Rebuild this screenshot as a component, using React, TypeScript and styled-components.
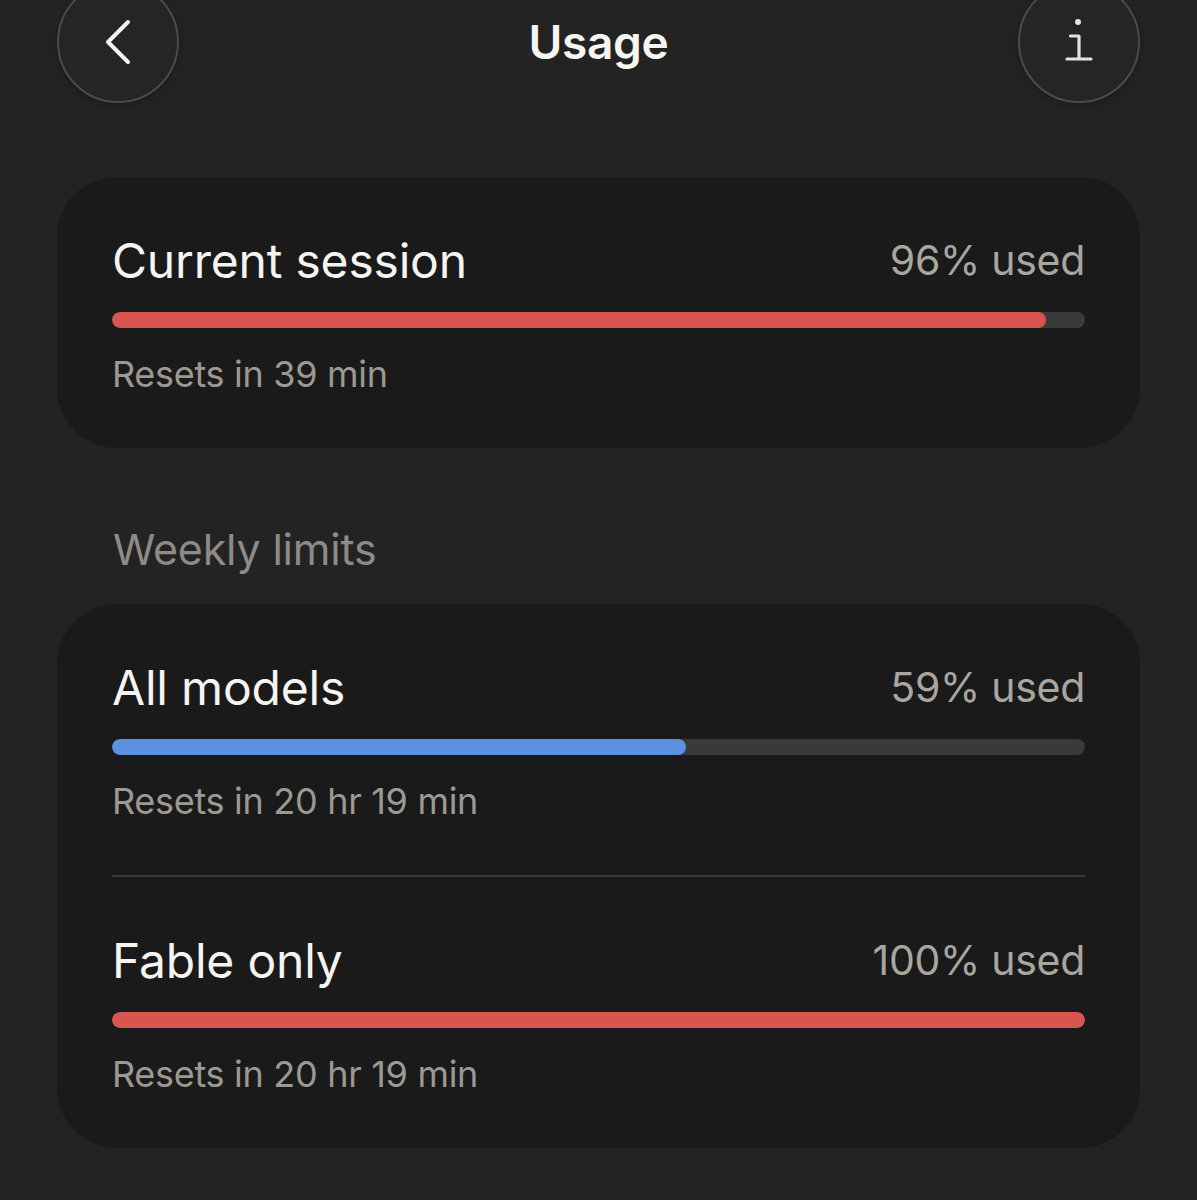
import styled, { createGlobalStyle } from 'styled-components';

const GlobalStyle = createGlobalStyle`
	html, body {
		margin: 0;
		padding: 0;
		background: #232323;
	}
	body {
		font-family: Inter, 'Noto Sans', 'DejaVu Sans', sans-serif;
		-webkit-font-smoothing: antialiased;
	}
`;

type Limit = {
	title: string;
	percent: number;
	resets: string;
	color: string;
};

const session: Limit = {
	title: 'Current session',
	percent: 96,
	resets: 'Resets in 39 min',
	color: '#d9554e',
};

const weekly: Limit[] = [
	{ title: 'All models', percent: 59, resets: 'Resets in 20 hr 19 min', color: '#5b91de' },
	{ title: 'Fable only', percent: 100, resets: 'Resets in 20 hr 19 min', color: '#d9554e' },
];

const UsageSection = ({ limit, divided }: { limit: Limit; divided?: boolean }) => (
	<Section divided={divided}>
		<TopRow>
			<Title>{limit.title}</Title>
			<Used>{limit.percent}% used</Used>
		</TopRow>
		<Track>
			<Fill color={limit.color} style={{ width: `${limit.percent}%` }} />
		</Track>
		<Resets>{limit.resets}</Resets>
	</Section>
);

const App = () => (
	<Page>
		<GlobalStyle />
		<Header>
			<RoundButton aria-label="Back">
				<svg width="40" height="50" viewBox="0 0 40 50">
					<path
						d="M30 5 L10 25 L30 45"
						fill="none"
						stroke="#f4f2ee"
						strokeWidth="4"
						strokeLinecap="round"
						strokeLinejoin="round"
					/>
				</svg>
			</RoundButton>
			<PageTitle>Usage</PageTitle>
			<RoundButton aria-label="Info">
				<svg width="40" height="50" viewBox="0 0 40 50">
					<circle cx="19" cy="5" r="3" fill="#e6e3dc" />
					<path
						d="M11.5 19 H20 V42 M8 42 H32"
						fill="none"
						stroke="#e6e3dc"
						strokeWidth="3.2"
						strokeLinecap="round"
						strokeLinejoin="round"
					/>
				</svg>
			</RoundButton>
		</Header>

		<Card>
			<UsageSection limit={session} />
		</Card>

		<GroupLabel>Weekly limits</GroupLabel>

		<Card>
			{weekly.map((l, i) => (
				<UsageSection key={l.title} limit={l} divided={i > 0} />
			))}
		</Card>
	</Page>
);

const Page = styled.div`
	width: 1197px;
	height: 1200px;
	box-sizing: border-box;
	padding: 0 57px;
	overflow: hidden;
	display: flex;
	flex-direction: column;
	background: #232323;
`;

const Header = styled.div`
	display: flex;
	align-items: center;
	justify-content: space-between;
	height: 122px;
	margin-top: -19px;
	margin-bottom: 74px;
`;

const RoundButton = styled.div`
	width: 122px;
	height: 122px;
	box-sizing: border-box;
	border-radius: 50%;
	border: 2px solid #4b4b4b;
	background: #252525;
	display: flex;
	align-items: center;
	justify-content: center;
	box-shadow: 0 2px 6px rgba(0, 0, 0, 0.25);
`;

const PageTitle = styled.div`
	font-size: 46px;
	font-weight: 600;
	color: #f7f5f1;
	line-height: 56px;
	letter-spacing: -0.3px;
`;

const Card = styled.div`
	background: #1a1a1a;
	border-radius: 60px;
	padding: 0 55px;
	display: flex;
	flex-direction: column;
`;

const Section = styled.div<{ divided?: boolean }>`
	padding: 55px 0 52px;
	border-top: ${({ divided }) => (divided ? '2px solid #3a3a3a' : 'none')};
`;

const TopRow = styled.div`
	display: flex;
	align-items: center;
	justify-content: space-between;
	height: 56px;
`;

const Title = styled.div`
	font-size: 48px;
	font-weight: 400;
	color: #f6f4f0;
	letter-spacing: -0.2px;
`;

const Used = styled.div`
	font-size: 41px;
	color: #a9a6a0;
	letter-spacing: -0.3px;
`;

const Track = styled.div`
	height: 16px;
	margin-top: 24px;
	border-radius: 8px;
	background: #3a3a3a;
	overflow: hidden;
`;

const Fill = styled.div<{ color: string }>`
	height: 100%;
	border-radius: 8px;
	background: ${({ color }) => color};
`;

const Resets = styled.div`
	margin-top: 24px;
	line-height: 44px;
	font-size: 36px;
	color: #9c9993;
	letter-spacing: -0.3px;
`;

const GroupLabel = styled.div`
	margin: 76px 0 30px 56px;
	line-height: 50px;
	font-size: 43px;
	color: #8e8b86;
	letter-spacing: -0.2px;
`;

export default App;
